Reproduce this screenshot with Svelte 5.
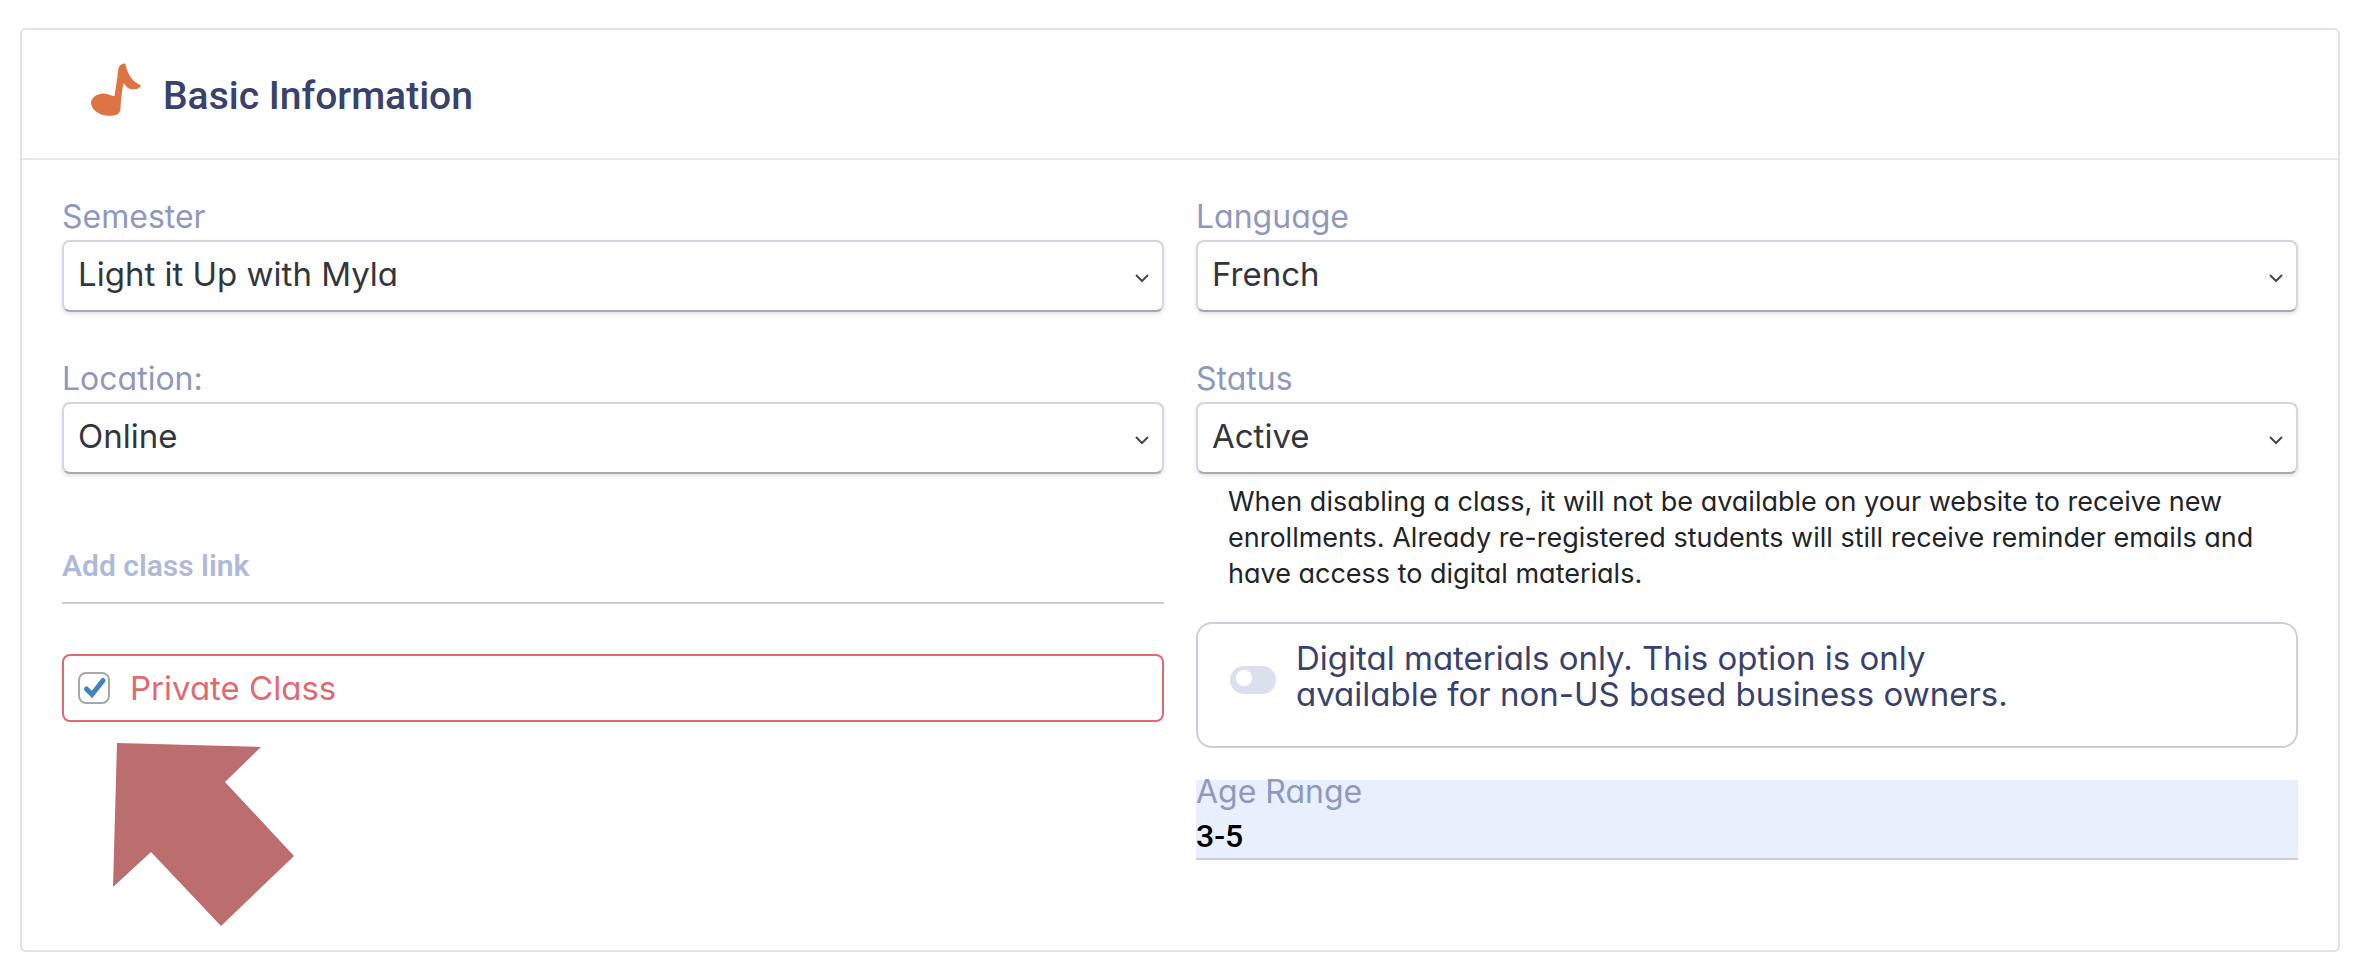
<script lang="ts">
  let semester = $state('Light it Up with Myla');
  let language = $state('French');
  let location = $state('Online');
  let status = $state('Active');
  let classLink = $state('');
  let isPrivate = $state(true);
  let digitalOnly = $state(false);
  let ageRange = $state('3-5');
</script>

{#snippet chevron()}
  <svg class="chevron" viewBox="0 0 14 9" width="14" height="9" fill="none" stroke="#4a4a4a" stroke-width="2" aria-hidden="true"><path d="M1 1l6 6 6-6" /></svg>
{/snippet}

<section class="card" aria-labelledby="basic-info">
  <header>
    <svg class="note-icon" viewBox="30 35 160 165" width="53" height="55" aria-hidden="true">
      <path fill="#de7444" d="M33 155C38 137 56 129 76 130C88 131 97 138 104 137L113 78C113 66 115 54 118 48C123 41 131 38 137 39C139 52 144 69 154 82C163 95 174 100 185 106C178 115 162 120 149 115C141 112 136 105 132 98C127 108 127 130 124 150C121 166 125 181 117 189C107 198 82 199 64 193C47 186 32 171 33 155Z" />
    </svg>
    <h2 id="basic-info">Basic Information</h2>
  </header>

  <div class="body">
    <div class="column">
      <div class="field">
        <label for="semester">Semester</label>
        <div class="select">
          <select id="semester" bind:value={semester}>
            <option>Light it Up with Myla</option>
          </select>
          {@render chevron()}
        </div>
      </div>

      <div class="field">
        <label for="location">Location:</label>
        <div class="select">
          <select id="location" bind:value={location}>
            <option>Online</option>
          </select>
          {@render chevron()}
        </div>
      </div>

      <input class="link-input" type="text" placeholder="Add class link" aria-label="Add class link" bind:value={classLink} />

      <div>
        <label class="private">
          <span class="tick">
            <input type="checkbox" bind:checked={isPrivate} />
            {#if isPrivate}
              <svg viewBox="0 0 32 32" width="32" height="32" aria-hidden="true"><path d="M8.5 17l5.5 5.500L25 8.500" fill="none" stroke="#4481c0" stroke-width="5" stroke-linecap="round" /></svg>
            {/if}
          </span>
          Private Class
        </label>
        <svg class="arrow" viewBox="0 0 182 183" width="182" height="183" aria-hidden="true">
          <path fill="#bc6d6d" d="M4 0L148 4L112 39L181 113L108 183L38 109L0 144Z" />
        </svg>
      </div>
    </div>

    <div class="column">
      <div class="field">
        <label for="language">Language</label>
        <div class="select">
          <select id="language" bind:value={language}>
            <option>French</option>
          </select>
          {@render chevron()}
        </div>
      </div>

      <div>
        <div class="field">
          <label for="status">Status</label>
          <div class="select">
            <select id="status" bind:value={status} aria-describedby="status-help">
              <option>Active</option>
            </select>
            {@render chevron()}
          </div>
        </div>
        <p class="help" id="status-help">
          When disabling a class, it will not be available on your website to receive new
          enrollments. Already re-registered students will still receive reminder emails and
          have access to digital materials.
        </p>

        <label class="digital">
          <input type="checkbox" role="switch" bind:checked={digitalOnly} />
          <span>Digital materials only. This option is only available for non-US based business owners.</span>
        </label>

        <div class="age">
          <label for="age">Age Range</label>
          <input id="age" type="text" bind:value={ageRange} />
        </div>
      </div>
    </div>
  </div>
</section>

<style>
  :global(body) {
    background: #fff;
  }
  .card {
    margin: 28px 22px 28px 20px;
    border: 2px solid #e1e1ea;
    border-radius: 6px;
    font-family: Inter, "Open Sans", sans-serif;
    /* single-storey a */
    font-feature-settings: "cv11";
    color: #212529;
  }
  header {
    display: flex;
    align-items: center;
    gap: 20px;
    padding: 28px 68px 24px;
    height: 76px;
    border-bottom: 2px solid #e5e8ef;
  }
  .note-icon {
    margin-bottom: 14px;
  }
  h2 {
    margin: 0;
    font-family: Roboto, sans-serif;
    font-weight: 500;
    font-size: 39px;
    line-height: 48px;
    color: #39426c;
  }
  .body {
    display: grid;
    grid-template-columns: 1fr 1fr;
    gap: 32px;
    align-items: start;
    padding: 40px 40px 24px;
  }
  .column {
    display: flex;
    flex-direction: column;
    gap: 50px;
    min-width: 0;
  }
  .field {
    display: flex;
    flex-direction: column;
    gap: 6px;
  }
  .field label,
  .age label {
    font-size: 32px;
    line-height: 34px;
    color: #9099bd;
  }
  .select {
    display: grid;
    align-items: center;
  }
  .select select,
  .chevron {
    grid-area: 1 / 1;
  }
  select {
    appearance: none;
    width: 100%;
    height: 72px;
    padding: 0 40px 4px 14px;
    border: 2px solid #d5d4e2;
    border-bottom-color: #a6a9b8;
    border-radius: 8px;
    box-shadow: 0 2px 4px rgba(0, 0, 0, 0.12);
    background: #fff;
    font: inherit;
    font-feature-settings: inherit;
    font-size: 33px;
    color: #33363b;
  }
  .chevron {
    justify-self: end;
    margin: 4px 15px 0 0;
    pointer-events: none;
  }
  .link-input,
  .age input {
    display: block;
    box-sizing: border-box;
    width: 100%;
    padding: 4px 0 0;
    border: none;
    border-bottom: 2px solid #ceced8;
    border-radius: 0;
    background: transparent;
    font-family: Roboto, sans-serif;
    font-size: 32px;
    font-weight: 500;
    color: #000;
  }
  .link-input {
    height: 80px;
    font-size: 30px;
  }
  .link-input::placeholder {
    color: #b1b9d8;
    opacity: 1;
    font-weight: 600;
  }
  .private {
    display: flex;
    align-items: center;
    gap: 20px;
    height: 64px;
    padding: 0 14px;
    border: 2px solid #df6b70;
    border-radius: 8px;
    font-size: 33px;
    color: #df6b70;
  }
  .tick {
    display: grid;
  }
  .tick > * {
    grid-area: 1 / 1;
  }
  .tick input {
    appearance: none;
    box-sizing: border-box;
    width: 32px;
    height: 32px;
    margin: 0;
    border: 2px solid #a8a8a8;
    border-radius: 8px;
  }
  .tick svg {
    pointer-events: none;
  }
  .arrow {
    display: block;
    margin: 21px 0 0 51px;
  }
  .help {
    margin: 10px 32px 30px;
    font-size: 27px;
    line-height: 36px;
  }
  .digital {
    display: flex;
    align-items: flex-start;
    gap: 20px;
    padding: 16px 32px 34px;
    border: 2px solid #cfced8;
    border-radius: 16px;
    font-size: 33px;
    line-height: 36px;
    color: #39426c;
  }
  .digital span {
    max-width: 740px;
  }
  .digital input {
    appearance: none;
    flex: none;
    box-sizing: border-box;
    width: 46px;
    height: 28px;
    margin: 26px 0 0;
    padding: 4px 6px;
    border-radius: 14px;
    background: #dce0ec;
  }
  .digital input::before {
    content: "";
    display: block;
    width: 16px;
    height: 16px;
    border-radius: 50%;
    background: #fff;
  }
  .digital input:checked {
    padding-left: 24px;
    background: #39426c;
  }
  .age {
    margin-top: 32px;
    background: #e8effd;
  }
  .age label {
    display: block;
    line-height: 24px;
  }
  .age input {
    height: 56px;
    padding-top: 10px;
  }
</style>
